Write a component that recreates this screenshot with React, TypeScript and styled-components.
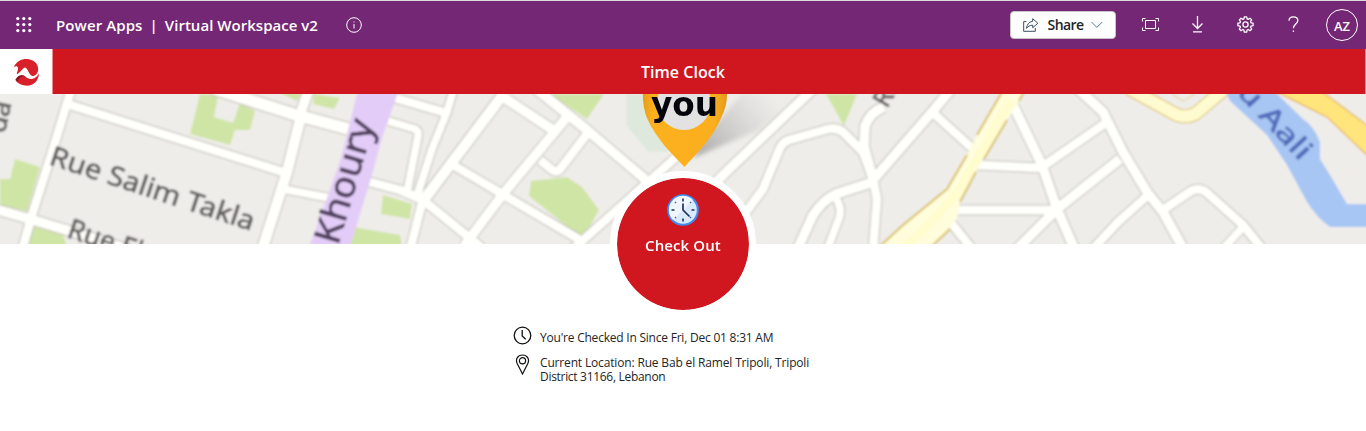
import React from "react";
import styled, { createGlobalStyle } from "styled-components";

const GlobalStyle = createGlobalStyle`
  * { box-sizing: border-box; }
  html, body { margin: 0; background: #fff; overflow: hidden; }
  body { font-family: "Open Sans", "Noto Sans", sans-serif; color: #242424; }
  svg { display: block; }
`;

const Page = styled.div`
  display: flex;
  flex-direction: column;
  width: 1366px;
  height: 431px;
  background: #fff;
`;

const TopBar = styled.header`
  display: flex;
  align-items: center;
  height: 49px;
  flex: none;
  padding: 0 8px 0 16px;
  background: #742774;
  border-top: 1px solid #dcdcdc;
  color: #fff;
`;

const AppTitle = styled.div`
  display: flex;
  align-items: center;
  margin-left: 24px;
  width: 262px;
  white-space: pre;
  font-size: 15px;
  font-weight: 600;
  line-height: 20px;
`;

const Label = styled.span<{ $spacing?: number }>`
  letter-spacing: ${(p) => p.$spacing ?? 0}px;
`;

const Divider = styled.span`
  margin: 0 7px;
`;

const InfoSlot = styled.div`
  margin: -1px 0 0 28px;
`;

const Actions = styled.div`
  display: flex;
  align-items: center;
  margin-left: auto;
`;

const ShareButton = styled.button`
  display: flex;
  align-items: center;
  width: 106px;
  height: 28px;
  padding: 0 12px;
  margin-right: 25px;
  border: 1px solid #c8c6c4;
  border-radius: 4px;
  background: #fff;
  color: #242424;
  font: 600 14px/20px "Open Sans", sans-serif;
  letter-spacing: -0.6px;
`;

const ShareText = styled.span`
  margin: 0 8px 0 9px;
`;

const IconSlot = styled.div`
  display: flex;
  justify-content: center;
  width: 48px;
  margin-top: -1px;
  &:first-of-type { width: 18px; margin-right: 14px; }
`;

const Avatar = styled.div`
  display: flex;
  align-items: center;
  justify-content: center;
  width: 32px;
  height: 32px;
  margin-left: 9px;
  padding-top: 2px;
  border: 1px solid #fff;
  border-radius: 50%;
  font-size: 13px;
  font-weight: 600;
`;

const ScreenBar = styled.div`
  display: flex;
  height: 45px;
  flex: none;
  background: #d01720;
  border-right: 1px solid #e88a8e;
`;

const LogoBox = styled.div`
  display: flex;
  align-items: center;
  justify-content: center;
  width: 53px;
  padding: 2px 0 0 1px;
  background: #fff;
  border-right: 1px solid #e88a8e;
`;

const ScreenTitle = styled.h1`
  flex: 1;
  margin: 0 52px 0 0;
  text-align: center;
  color: #fff;
  font-size: 16px;
  font-weight: 600;
  line-height: 46px;
  letter-spacing: 0.05px;
`;

const MapArea = styled.section`
  height: 150px;
  flex: none;
  overflow: hidden;
`;

const CheckOut = styled.button`
  position: relative;
  z-index: 1;
  display: flex;
  flex-direction: column;
  align-items: center;
  align-self: center;
  width: 146px;
  height: 146px;
  flex: none;
  margin: -73px 0 0;
  padding: 16px 0 0;
  border: 7px solid #fff;
  border-radius: 50%;
  background: #d01720;
  background-clip: padding-box;
  color: #fff;
  font: 600 15px/20px "Open Sans", sans-serif;
`;

const CheckLabel = styled.span`
  margin-top: 9px;
  letter-spacing: 0.1px;
`;

const Status = styled.div`
  display: flex;
  flex-direction: column;
  gap: 5px;
  width: 340px;
  margin: 9px 0 0 513px;
`;

const StatusRow = styled.div`
  display: flex;
  align-items: flex-start;
  font-size: 12px;
  line-height: 14px;
`;

const StatusIcon = styled.div<{ $top?: number }>`
  width: 27px;
  flex: none;
  padding-top: ${(p) => p.$top ?? 0}px;
`;

const StatusText = styled.div<{ $top: number; $spacing: number }>`
  padding-top: ${(p) => p.$top}px;
  letter-spacing: ${(p) => p.$spacing}px;
  white-space: nowrap;
`;

const streets: [string, number][] = [
  ["M71 90 L67 103 L53 149 L32 215 L22 250", 9],
  ["M64 103 L283 172", 9],
  ["M212 88 L293 114 L352 130", 12],
  ["M302 112 L287 172 L262 250", 11],
  ["M283 189 L335 199", 8],
  ["M-5 209 L33 220 L80 234 L130 250", 10],
  ["M310 86 L301 112", 10],
  ["M395 98 L443 112", 9],
  ["M454 88 L447 112 L432 149 L417 196", 8],
  ["M388 121 L415 129 Q419 131 418 136 L407 192", 8],
  ["M505 92 L450 165 L423 201", 11],
  ["M366 181 L400 190 L423 200 L482 248", 9],
  ["M423 199 L410 250", 9],
  ["M503 97 L553 130", 10],
  ["M567 117 L503 194 L464 246", 10],
  ["M453 165 L580 240", 9],
  ["M535 88 L587 130 L660 192", 10],
  ["M587 134 L561 168 Q557 174 551 169 L540 160", 9],
  ["M684 150 L572 250", 9],
  ["M814 88 L723 175 L700 200", 10],
  ["M740 220 L763 189 L780 148 Q783 142 789 140 L828 129 Q836 127 843 132 L863 152 L873 179 L877 199 L873 250", 9],
  ["M884 107 Q870 112 865 126 L864 146 L873 179", 10],
  ["M797 250 L813 215 Q824 199 836 194 L873 182", 10],
  ["M834 196 Q844 208 838 221 L827 250", 8],
  ["M873 180 L932 112 L952 88", 10],
  ["M932 112 L973 149", 9],
  ["M1013 105 L1042 165 L1057 209 L1075 250", 10],
  ["M975 165 L1042 168", 9],
  ["M1042 167 L1107 122", 9],
  ["M1077 88 L1103 112 L1123 152 L1147 192 L1163 212 L1184 250", 10],
  ["M1120 159 L1057 209 L1016 250", 10],
  ["M957 210 L1057 210", 9],
  ["M948 219 L973 250", 9],
  ["M1092 250 L1118 222 L1147 196", 9],
  ["M1163 210 L1191 191 Q1199 187 1206 192 L1243 225 L1263 250", 9],
  ["M1243 227 L1222 250", 8],
];

const greens = [
  "M200 94 L218 96 L214 117 L233 123 L240 103 L255 111 L250 130 L235 130 L230 145 L190 134Z",
  "M314 94 L340 98 L334 109 L313 104Z",
  "M280 93 L301 93 L297 101Z",
  "M15 159 L40 167 L27 211 L0 205 L0 179 L10 179Z",
  "M29 225 L63 235 L67 246 L26 246Z",
  "M550 94 L604 94 L587 119Z",
  "M531 181 L567 177 L582 187 L599 210 L583 239 L529 196Z",
  "M383 195 L412 204 L410 219 L381 214Z",
  "M353 227 L400 235 L402 246 L347 246Z",
  "M826 94 L857 94 L844 126Z",
];

function MapPicture() {
  return (
    <svg width="1366" height="150" viewBox="0 94 1366 150">
      <defs>
        <linearGradient id="pinShade" x1="695" y1="155" x2="775" y2="94" gradientUnits="userSpaceOnUse">
          <stop offset="0" stopColor="#8b8b8b" stopOpacity="0.7" />
          <stop offset="1" stopColor="#bbb" stopOpacity="0" />
        </linearGradient>
        <linearGradient id="pinFill" x1="0" x2="1">
          <stop offset="0" stopColor="#e89c1a" />
          <stop offset="0.12" stopColor="#fbb11f" />
          <stop offset="0.85" stopColor="#fbae1e" />
          <stop offset="1" stopColor="#e09a1c" />
        </linearGradient>
        <filter id="soft" x="0" y="0" width="100%" height="100%">
          <feGaussianBlur stdDeviation="0.8" />
        </filter>
        <filter id="shadeSoft">
          <feGaussianBlur stdDeviation="2" />
        </filter>
      </defs>
      <rect x="0" y="94" width="1366" height="150" fill="#efedea" />
      <g filter="url(#soft)">
        <rect x="-10" y="84" width="1386" height="170" fill="#efedea" />
        <path d="M626 94 L665 94 L668 152 L648 152 L626 125Z" fill="#dfe8dd" />
        {greens.map((d) => (
          <path key={d} d={d} fill="#cfe5a5" />
        ))}
        <g fill="none" strokeLinejoin="round">
          {streets.map(([d, w]) => (
            <path key={d} d={d} stroke="#bfbcb2" strokeWidth={w + 2} />
          ))}
          {streets.map(([d, w]) => (
            <path key={d} d={d} stroke="#fffffb" strokeWidth={w} />
          ))}
        </g>
        <path d="M358 90 L399 90 L383 135 L370 182 L349 250 L308 250 L328 195 L341 158Z" fill="#e3cdf8" />
        <path d="M1003 90 L977 135 L967 155 L947 189 L903 225 L875 250 L930 250 L957 219 L960 202 L983 159 L1007 120 L1027 90Z" fill="#fffddc" />
        <g fill="none" stroke="#d8c05c" strokeWidth="2">
          <path d="M1002 92 L977 135 M967 155 L947 189 L903 225 L878 248" />
          <path d="M1024 92 L1019 101 M1007 120 L984 159 M976 172 L960 202 M950 229 L930 248" />
        </g>
        <path d="M903 250 L935 218 L958 192 L980 154 L1010 100" fill="none" stroke="#fffbbc" strokeWidth="8" opacity="0.45" />
        <path d="M1128 88 L1177 115 Q1186 118 1195 114 L1226 88" fill="none" stroke="#d8bd5c" strokeWidth="14" />
        <path d="M1128 88 L1177 115 Q1186 118 1195 114 L1226 88" fill="none" stroke="#fffbd0" strokeWidth="12" />
        <path d="M1172 94 L1183 101 L1195 94" fill="#efeeea" stroke="#dfc977" />
        <path d="M1225 90 L1230 101 L1267 135 L1287 165 L1307 202 Q1318 219 1330 227 L1370 227 L1370 204 L1347 204 L1330 175 L1320 159 L1320 142 Q1314 126 1303 119 L1273 90Z" fill="#a8c6f4" />
        <path d="M1273 90 L1327 117 L1372 160 L1372 129 L1320 90Z" fill="#ffe57c" stroke="#e8b968" strokeWidth="1.5" />
        <path d="M693 158 L704 137 L742 94 L806 94 L758 130Z" fill="url(#pinShade)" filter="url(#shadeSoft)" />
        <g fontFamily="'Noto Sans', sans-serif" strokeWidth="0.7">
          <g fill="#5f5d5d" stroke="#5f5d5d">
            <text transform="translate(48 164) rotate(18.2)" fontSize="27" textLength="214" lengthAdjust="spacingAndGlyphs">Rue Salim Takla</text>
            <text transform="translate(66 237) rotate(18.2)" fontSize="27" textLength="77" lengthAdjust="spacingAndGlyphs">Rue El</text>
            <text transform="translate(5 134) rotate(-78)" fontSize="27">da</text>
            <text transform="translate(887 109) rotate(-60)" fontSize="25">Rue</text>
          </g>
          <text transform="translate(338 246) rotate(-73.5)" fontSize="36" textLength="128" lengthAdjust="spacingAndGlyphs" fill="#51405f" stroke="#51405f">Khoury</text>
          <text transform="translate(1236 93) rotate(47)" fontSize="28" fill="#506ab8" stroke="#506ab8" textLength="94" lengthAdjust="spacingAndGlyphs">u Aali</text>
        </g>
      </g>
      <path d="M643 90 Q642 105 647 118 C656 139 673 155 684.500 167 C696 154 713 138 721 118 Q728 105 727 90Z" fill="url(#pinFill)" />
      <circle cx="684" cy="103" r="27" fill="#e2e2e2" />
      <text x="651" y="115.500" fontFamily="'DejaVu Sans', sans-serif" fontWeight="700" fontSize="33" textLength="67" lengthAdjust="spacingAndGlyphs" fill="#05050c">you</text>
    </svg>
  );
}

const dots = [0, 6, 12];

export default function App() {
  return (
    <Page>
      <GlobalStyle />
      <TopBar>
        <svg width="16" height="16" viewBox="0 0 16 16" fill="#fff">
          {dots.map((y) => dots.map((x) => <circle key={`${x}-${y}`} cx={x + 1.8} cy={y + 1.6} r="1.6" />))}
        </svg>
        <AppTitle>
          <Label $spacing={0.1}>Power Apps</Label>
          <Divider>|</Divider>
          <Label $spacing={0.03}>Virtual Workspace v2</Label>
        </AppTitle>
        <InfoSlot>
          <svg width="16" height="16" viewBox="0 0 16 16" fill="none" stroke="#fff">
            <circle cx="8" cy="8" r="7.3" />
            <path d="M8 7v4.500M8 4.500v1" />
          </svg>
        </InfoSlot>
        <Actions>
          <ShareButton>
            <svg width="16" height="16" viewBox="0 0 16 16" fill="none" stroke="#33475c">
              <path d="M3.500 4.500H.7v10h12V11" />
              <path d="M10 1.500l5.300 4.700L10 10.800V8.200C7 8.200 5 9.500 3.600 11.500 4 7.500 6.200 4.600 10 4.200z" strokeLinejoin="round" />
            </svg>
            <ShareText>Share</ShareText>
            <svg width="12" height="8" viewBox="0 0 12 8" fill="none" stroke="#3f7ba8">
              <path d="M.5 1l5.500 5.500L11.500 1" />
            </svg>
          </ShareButton>
          <IconSlot>
            <svg width="17" height="13" viewBox="0 0 17 13" fill="none" stroke="#fff">
              <path d="M3.500 2.500h10v8h-10zM.5 3.500v-3h3M13.500.5h3v3M16.500 9.500v3h-3M3.500 12.500h-3v-3" />
            </svg>
          </IconSlot>
          <IconSlot>
            <svg width="13" height="17" viewBox="0 0 13 17" fill="none" stroke="#fff" strokeWidth="1.3">
              <path d="M6.500 0v12.500M1.500 7.500l5 5 5-5M2 15.900h9" />
            </svg>
          </IconSlot>
          <IconSlot>
            <svg width="17" height="17" viewBox="0 0 17 17" fill="none" stroke="#fff" strokeWidth="1.3" strokeLinejoin="round">
              <path d="M7.300.8h2.400l.4 2.100 1.100.5 1.800-1.200 1.700 1.700-1.200 1.800.5 1.100 2.100.4v2.500l-2.100.4-.5 1.100 1.200 1.800-1.700 1.700-1.800-1.200-1.100.5-.4 2.100H7.300l-.4-2.100-1.100-.5L4 14.700 2.300 13l1.200-1.800-.5-1.100-2.100-.4V7.200l2.100-.4.5-1.100-1.200-1.800L4 2.200l1.800 1.200 1.100-.5z" />
              <circle cx="8.500" cy="8.500" r="2.600" />
            </svg>
          </IconSlot>
          <IconSlot>
            <svg width="11" height="17" viewBox="0 0 11 17" fill="none" stroke="#fff" strokeWidth="1.300">
              <path d="M1 4.700C1 2.300 2.700.8 5.300.8s4.500 1.500 4.500 3.700c0 3.500-4.400 3.700-4.400 7.800M5.400 14.500v1.500" />
            </svg>
          </IconSlot>
          <Avatar>AZ</Avatar>
        </Actions>
      </TopBar>
      <ScreenBar>
        <LogoBox>
          <svg width="28" height="30" viewBox="0 0 28 30">
            <path d="M.8 9C3.500 3.500 8 1 13.500 1 20.500 1.200 25.200 5.500 25.200 11.500 25 15.500 22.500 18 19.500 18 16 17.500 15 9.800 12 9.500 9.500 10 8 14 4.200 16.200 3.200 16 5.200 12.500 5 10 4.500 7.800 3 8 .8 9z" fill="#d8202b" />
            <path d="M2.500 21.800C5 17 9 16.500 12.200 18.300 16 22.500 22 22 26 15.500 25.500 23 20.500 27.700 14 27.700 9 27.700 5 25.500 3 22.800z" fill="#d8202b" />
            <path d="M2.500 21.800C5 17 9 16.500 12.200 18.300 9 18 6.500 19.500 4.200 24z" fill="#841923" />
          </svg>
        </LogoBox>
        <ScreenTitle>Time Clock</ScreenTitle>
      </ScreenBar>
      <MapArea>
        <MapPicture />
      </MapArea>
      <CheckOut>
        <svg width="32" height="32" viewBox="0 0 32 32">
          <circle cx="16" cy="16" r="14.800" fill="#d9eafd" stroke="#3d8df5" strokeWidth="2" />
          <path d="M6 26A14 14 0 0 1 26 6z" fill="#eff6fe" />
          <path d="M16 4.500v3M16 24.500v3M4.500 16h3M24.500 16h3" stroke="#20305e" strokeWidth="1.600" />
          <path d="M8 8l1 1M23 9l1-1M8 24l1-1M23 23l1 1" stroke="#46618f" strokeWidth="1.500" />
          <path d="M16 9.500V16l6.500 6.500" fill="none" stroke="#20305e" strokeWidth="1.700" />
        </svg>
        <CheckLabel>Check Out</CheckLabel>
      </CheckOut>
      <Status>
        <StatusRow>
          <StatusIcon>
            <svg width="19" height="19" viewBox="0 0 19 19" fill="none" stroke="#111" strokeWidth="1.300">
              <circle cx="9.500" cy="9.500" r="8.300" />
              <path d="M9.200 4v6l3.500 3.200" />
            </svg>
          </StatusIcon>
          <StatusText $top={5} $spacing={-0.22}>You're Checked In Since Fri, Dec 01 8:31 AM</StatusText>
        </StatusRow>
        <StatusRow>
          <StatusIcon $top={4}>
            <svg width="19" height="21" viewBox="0 0 19 21" fill="none" stroke="#111" strokeWidth="1.200">
              <path d="M9.500 20L4.300 9.800C2 5 5 1 9.500 1s7.500 4 5.200 8.800z" />
              <circle cx="9.500" cy="6.800" r="3.100" />
            </svg>
          </StatusIcon>
          <StatusText $top={6} $spacing={-0.16}>
            Current Location: Rue Bab el Ramel Tripoli, Tripoli
            <br />
            <Label $spacing={-0.3}>District 31166, Lebanon</Label>
          </StatusText>
        </StatusRow>
      </Status>
    </Page>
  );
}
